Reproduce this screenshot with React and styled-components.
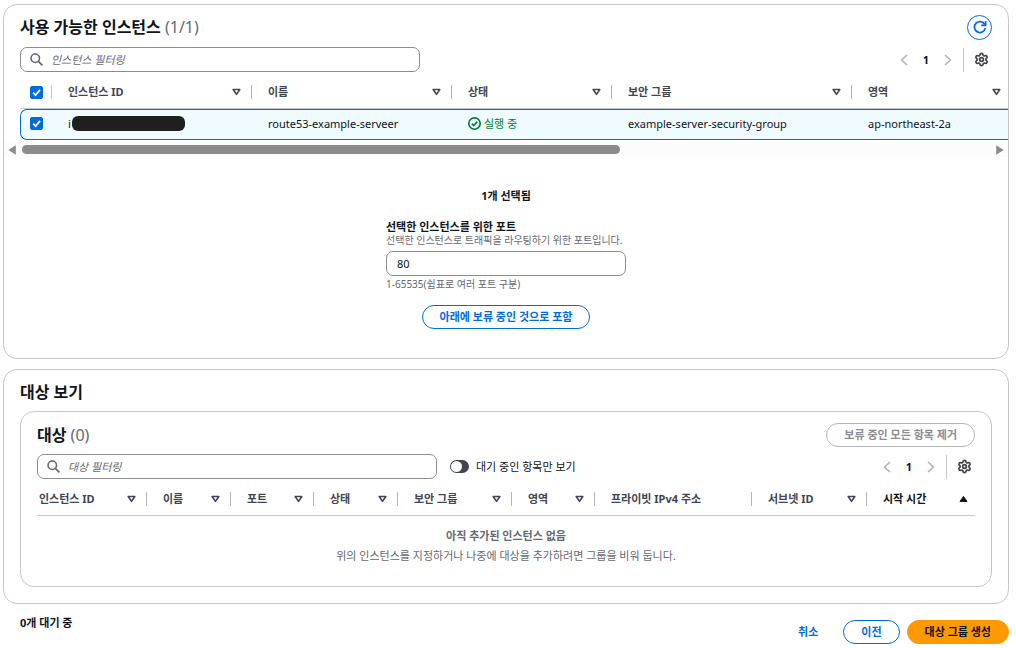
import React, { useState } from "react";
import styled, { createGlobalStyle } from "styled-components";
import { Settings } from "lucide-react";

const INSTANCE_COLUMNS = [
  { label: "인스턴스 ID", width: 200 },
  { label: "이름", width: 200 },
  { label: "상태", width: 160 },
  { label: "보안 그룹", width: 240 },
  { label: "영역", width: 160 },
];

const TARGET_COLUMNS = [
  { label: "인스턴스 ID", width: 110 },
  { label: "이름", width: 84 },
  { label: "포트", width: 83 },
  { label: "상태", width: 84 },
  { label: "보안 그룹", width: 114 },
  { label: "영역", width: 83 },
  { label: "프라이빗 IPv4 주소", width: 157, sort: "none" },
  { label: "서브넷 ID", width: 115 },
  { label: "시작 시간", width: 108, sort: "asc" },
];

function SearchIcon() {
  return (
    <svg width="13" height="13" viewBox="0 0 16 16" fill="none" stroke="#656871" strokeWidth="2">
      <circle cx="6.5" cy="6.5" r="5.2" />
      <path d="M10.3 10.3l5 5" />
    </svg>
  );
}

function RefreshIcon() {
  return (
    <svg width="14" height="14" viewBox="0 0 16 16" fill="none" stroke="currentColor" strokeWidth="2">
      <path d="M14 9.200A6.200 6.200 0 1 1 13.400 5.200" />
      <path d="M14.400 1v5H9.400" />
    </svg>
  );
}

function Chevron({ next }) {
  return (
    <svg width="8" height="12" viewBox="0 0 8 12" fill="none" stroke="#b4b4bb" strokeWidth="1.7">
      <path d={next ? "M1 1l5.4 5L1 11" : "M7 1L1.6 6 7 11"} />
    </svg>
  );
}

function SortIcon({ asc }) {
  return (
    <svg width="9" height="8" viewBox="0 0 9 8" strokeWidth="1.6" strokeLinejoin="round">
      {asc ? (
        <path d="M4.5 1.4L8 6.4H1z" fill="#0f141a" stroke="#0f141a" strokeWidth="1" />
      ) : (
        <path d="M1.2 1.5h6.6L4.5 6.4z" fill="none" stroke="#424650" />
      )}
    </svg>
  );
}

function StatusIcon() {
  return (
    <svg width="13" height="13" viewBox="0 0 16 16" fill="none" stroke="#00802f" strokeWidth="2">
      <circle cx="8" cy="8" r="7" />
      <path d="M4.8 8.2l2.3 2.3 4.2-4.8" />
    </svg>
  );
}

function Check({ label }) {
  const [checked, setChecked] = useState(true);
  return (
    <CheckWrap>
      <input
        type="checkbox"
        aria-label={label}
        checked={checked}
        onChange={(e) => setChecked(e.target.checked)}
      />
      {checked && (
        <svg width="13" height="13" viewBox="0 0 13 13" fill="none" stroke="#fff" strokeWidth="1.8">
          <path d="M3.2 6.6l2.4 2.5 4.4-5.2" />
        </svg>
      )}
    </CheckWrap>
  );
}

function Filter({ placeholder }) {
  return (
    <FilterBox>
      <SearchIcon />
      <input type="search" placeholder={placeholder} aria-label={placeholder} />
    </FilterBox>
  );
}

function Pager() {
  return (
    <PagerBar>
      <IconButton type="button" aria-label="이전 페이지">
        <Chevron />
      </IconButton>
      <PageNumber type="button">1</PageNumber>
      <IconButton type="button" aria-label="다음 페이지">
        <Chevron next />
      </IconButton>
      <PagerDivider />
      <IconButton type="button" aria-label="기본 설정">
        <Settings size={15} strokeWidth={2.8} color="#424650" />
      </IconButton>
    </PagerBar>
  );
}

function HeadCell({ column, first, last }) {
  const sort = column.sort || "desc";
  return (
    <Th scope="col">
      <HeadInner $first={first} $last={last} $sorted={sort === "asc"}>
        <span>{column.label}</span>
        {sort !== "none" && <SortIcon asc={sort === "asc"} />}
        {!last && <HeadDivider />}
      </HeadInner>
    </Th>
  );
}

export default function App() {
  const [port, setPort] = useState("80");
  const [pendingOnly, setPendingOnly] = useState(false);

  return (
    <Page>
      <GlobalStyle />

      {/* 사용 가능한 인스턴스 */}
      <Panel>
        <PanelHeader>
          <Title>
            사용 가능한 인스턴스 <Count>(1/1)</Count>
          </Title>
          <RefreshButton type="button" aria-label="새로 고침">
            <RefreshIcon />
          </RefreshButton>
        </PanelHeader>
        <Toolbar $inset={16}>
          <Filter placeholder="인스턴스 필터링" />
          <Pager />
        </Toolbar>

        <TableClip>
          <InstanceTable>
            <colgroup>
              <col width={32} />
              {INSTANCE_COLUMNS.map((c) => (
                <col key={c.label} width={c.width} />
              ))}
            </colgroup>
            <thead>
              <tr>
                <Th scope="col">
                  <CheckCell>
                    <Check label="모두 선택" />
                    <HeadDivider $light />
                  </CheckCell>
                </Th>
                {INSTANCE_COLUMNS.map((c) => (
                  <HeadCell key={c.label} column={c} />
                ))}
              </tr>
            </thead>
            <tbody>
              <tr>
                <Td>
                  <CheckCell $row>
                    <Check label="인스턴스 선택" />
                  </CheckCell>
                </Td>
                <Td>
                  <IdText>
                    i<Redacted />
                  </IdText>
                </Td>
                <Td>route53-example-serveer</Td>
                <Td>
                  <Status>
                    <StatusIcon />
                    실행 중
                  </Status>
                </Td>
                <Td>example-server-security-group</Td>
                <Td>ap-northeast-2a</Td>
              </tr>
            </tbody>
          </InstanceTable>
        </TableClip>
        <ScrollBar>
          <svg width="8" height="10" viewBox="0 0 8 10" fill="#8b8b8b">
            <path d="M7.8 .3v9.400L.3 5z" />
          </svg>
          <ScrollTrack>
            <ScrollThumb />
          </ScrollTrack>
          <svg width="8" height="10" viewBox="0 0 8 10" fill="#8b8b8b">
            <path d="M.2 .3v9.400L7.700 5z" />
          </svg>
        </ScrollBar>

        <PortForm onSubmit={(e) => e.preventDefault()}>
          <Selected>1개 선택됨</Selected>
          <Field>
            <label htmlFor="port">선택한 인스턴스를 위한 포트</label>
            <Hint>선택한 인스턴스로 트래픽을 라우팅하기 위한 포트입니다.</Hint>
            <PortInput id="port" type="text" value={port} onChange={(e) => setPort(e.target.value)} />
            <Hint>1-65535(쉼표로 여러 포트 구분)</Hint>
          </Field>
          <Button type="submit">아래에 보류 중인 것으로 포함</Button>
        </PortForm>
      </Panel>

      {/* 대상 보기 */}
      <Panel>
        <PanelHeader>
          <Title>대상 보기</Title>
        </PanelHeader>
        <InnerPanel>
          <InnerHeader>
            <Title>
              대상 <Count>(0)</Count>
            </Title>
            <Button type="button" $variant="disabled" disabled>
              보류 중인 모든 항목 제거
            </Button>
          </InnerHeader>
          <Toolbar $inset={0}>
            <Filter placeholder="대상 필터링" />
            <Toggle>
              <input
                type="checkbox"
                role="switch"
                checked={pendingOnly}
                onChange={(e) => setPendingOnly(e.target.checked)}
              />
              대기 중인 항목만 보기
            </Toggle>
            <Pager />
          </Toolbar>
          <Table>
            <colgroup>
              {TARGET_COLUMNS.map((c) => (
                <col key={c.label} width={c.width} />
              ))}
            </colgroup>
            <thead>
              <tr>
                {TARGET_COLUMNS.map((c, i) => (
                  <HeadCell
                    key={c.label}
                    column={c}
                    first={i === 0}
                    last={i === TARGET_COLUMNS.length - 1}
                  />
                ))}
              </tr>
            </thead>
            <tbody>
              <tr>
                <EmptyCell colSpan={TARGET_COLUMNS.length}>
                  <strong>아직 추가된 인스턴스 없음</strong>
                  <p>위의 인스턴스를 지정하거나 나중에 대상을 추가하려면 그룹을 비워 둡니다.</p>
                </EmptyCell>
              </tr>
            </tbody>
          </Table>
        </InnerPanel>
      </Panel>

      <Footer>
        <Pending>0개 대기 중</Pending>
        <Actions>
          <Button type="button" $variant="link">
            취소
          </Button>
          <Button type="button">이전</Button>
          <Button type="button" $variant="primary">
            대상 그룹 생성
          </Button>
        </Actions>
      </Footer>
    </Page>
  );
}

/* ===== styles ===== */

const GlobalStyle = createGlobalStyle`
  * {
    box-sizing: border-box;
  }
  body {
    margin: 0;
    background: #fff;
    color: #0f141a;
    font-family: "Noto Sans", "Noto Sans CJK KR", sans-serif;
    font-size: 11px;
    line-height: 16px;
  }
  button,
  input {
    font: inherit;
    color: inherit;
  }
  button {
    cursor: pointer;
  }
  svg {
    display: block;
    flex: none;
  }
`;

const Page = styled.main`
  display: flex;
  flex-direction: column;
  gap: 10px;
  padding: 4px 7px 4px 3px;
`;

const Panel = styled.section`
  border: 1px solid #c6c6cd;
  border-radius: 14px;
  padding-bottom: 16px;
  overflow: hidden;
`;

const PanelHeader = styled.header`
  display: flex;
  align-items: center;
  justify-content: space-between;
  height: 41px;
  padding: 3px 16px 0;
`;

const Title = styled.h2`
  margin: 0;
  font-size: 16px;
  line-height: 20px;
  font-weight: 700;
`;

const Count = styled.span`
  font-weight: 400;
  color: #656871;
`;

const RefreshButton = styled.button`
  display: grid;
  place-items: center;
  width: 25px;
  height: 25px;
  padding: 0;
  border: 1px solid #006ce0;
  border-radius: 50%;
  background: #fff;
  color: #006ce0;
`;

const Toolbar = styled.div`
  display: flex;
  align-items: center;
  margin-top: 1px;
  padding: 0 ${(p) => p.$inset}px;
`;

const FilterBox = styled.div`
  display: flex;
  align-items: center;
  gap: 8px;
  width: 400px;
  height: 25px;
  padding: 0 9px;
  border: 1px solid #8c8c94;
  border-radius: 7px;

  input {
    flex: 1;
    min-width: 0;
    padding: 0;
    border: 0;
    outline: 0;
    background: none;
  }
  input::placeholder {
    color: #656871;
    font-style: italic;
    opacity: 1;
  }
`;

const PagerBar = styled.nav`
  display: flex;
  align-items: center;
  margin-left: auto;
`;

const IconButton = styled.button`
  display: grid;
  place-items: center;
  width: 22px;
  height: 24px;
  padding: 0;
  border: 0;
  background: none;
`;

const PageNumber = styled(IconButton)`
  font-weight: 700;
`;

const PagerDivider = styled.span`
  width: 1px;
  height: 24px;
  margin: 0 6px 0 4px;
  background: #c6c6cd;
`;

const TableClip = styled.div`
  margin-left: 16px;
  overflow: hidden;
`;

const Table = styled.table`
  width: 100%;
  table-layout: fixed;
  border-collapse: separate;
  border-spacing: 0;
`;

const Th = styled.th`
  height: 37px;
  padding: 4px 0 0;
  border-bottom: 1px solid #c6c6cd;
  text-align: left;
  color: #424650;
`;

const HeadInner = styled.div`
  display: flex;
  align-items: center;
  gap: 10px;
  padding: 0 ${(p) => (p.$last ? 7 : 0)}px 0 ${(p) => (p.$first ? 2 : 16)}px;
  color: ${(p) => (p.$sorted ? "#0f141a" : "inherit")};
  white-space: nowrap;

  span:first-child {
    margin-right: auto;
  }
`;

const HeadDivider = styled.i`
  width: 1px;
  height: 14px;
  background: ${(p) => (p.$light ? "#c6c6cd" : "#b4b4bb")};
`;

const CheckCell = styled.div`
  display: flex;
  align-items: center;
  justify-content: space-between;
  padding-left: ${(p) => (p.$row ? 9 : 10)}px;
`;

const CheckWrap = styled.span`
  display: grid;

  input,
  svg {
    grid-area: 1 / 1;
  }
  svg {
    pointer-events: none;
  }
  input {
    appearance: none;
    width: 13px;
    height: 13px;
    margin: 0;
    border: 1px solid #8c8c94;
    border-radius: 2px;
  }
  input:checked {
    border-color: #006ce0;
    background: #006ce0;
  }
`;

const Td = styled.td`
  height: 31px;
  padding: 0 0 2px 16px;
  border: solid #006ce0;
  border-width: 1px 0;
  background: #f0fbff;
  white-space: nowrap;

  &:first-child {
    padding-left: 0;
    border-left-width: 1px;
    border-radius: 7px 0 0 7px;
  }
`;

const InstanceTable = styled(Table)`
  min-width: 992px;
`;

const IdText = styled.span`
  display: flex;
  align-items: center;
  gap: 1px;
`;

const Redacted = styled.span`
  width: 113px;
  height: 15px;
  border-radius: 6px;
  background: #1f1f1f;
`;

const Status = styled.span`
  display: flex;
  align-items: center;
  gap: 3px;
  color: #00802f;
`;

const ScrollBar = styled.div`
  display: flex;
  align-items: center;
  gap: 6px;
  height: 15px;
  margin-top: 2px;
  padding: 0 4px;
  background: #fcfcfc;
`;

const ScrollTrack = styled.div`
  flex: 1;
`;

const ScrollThumb = styled.div`
  width: 61.8%;
  height: 9px;
  border-radius: 5px;
  background: #8b8b8b;
`;

const PortForm = styled.form`
  display: flex;
  flex-direction: column;
  align-items: center;
  padding: 31px 0 13px;
`;

const Selected = styled.strong`
  margin-bottom: 16px;
`;

const Field = styled.div`
  display: flex;
  flex-direction: column;
  width: 240px;

  label {
    font-weight: 700;
    line-height: 14px;
  }
`;

const Hint = styled.span`
  font-size: 10px;
  line-height: 12px;
  color: #656871;
  white-space: nowrap;
`;

const PortInput = styled.input`
  height: 25px;
  margin: 5px 0 2px;
  padding: 0 10px;
  border: 1px solid #8c8c94;
  border-radius: 7px;
`;

const variants = {
  normal: { color: "#006ce0", border: "#006ce0", background: "#fff" },
  link: { color: "#006ce0", border: "transparent", background: "none" },
  disabled: { color: "#8c8c94", border: "#b4b4bb", background: "#fff" },
  primary: { color: "#0f141a", border: "#ff9900", background: "#ff9900" },
};

const Button = styled.button`
  height: 24px;
  padding: 0 17px;
  border: 1px solid ${(p) => variants[p.$variant || "normal"].border};
  border-radius: 12px;
  background: ${(p) => variants[p.$variant || "normal"].background};
  color: ${(p) => variants[p.$variant || "normal"].color};
  font-weight: 700;
  white-space: nowrap;

  ${PortForm} & {
    margin-top: 15px;
  }
`;

const InnerPanel = styled.div`
  margin: 0 16px;
  padding: 0 16px 22px;
  border: 1px solid #c6c6cd;
  border-radius: 14px;
`;

const InnerHeader = styled.header`
  display: flex;
  align-items: center;
  justify-content: space-between;
  height: 41px;
  padding-top: 5px;
`;

const Toggle = styled.label`
  display: flex;
  align-items: center;
  gap: 7px;
  margin-left: 13px;

  input {
    appearance: none;
    display: flex;
    width: 19px;
    height: 13px;
    margin: 0;
    padding: 1px;
    border-radius: 7px;
    background: #424650;
  }
  input::before {
    content: "";
    width: 11px;
    height: 11px;
    border-radius: 50%;
    background: #fff;
  }
  input:checked {
    justify-content: flex-end;
    background: #006ce0;
  }
`;

const EmptyCell = styled.td`
  padding: 12px 0 0;
  text-align: center;
  color: #656871;

  p {
    margin: 4px 0 0;
  }
`;

const Footer = styled.footer`
  display: flex;
  justify-content: space-between;
  padding: 0 0 0 17px;
`;

const Pending = styled.strong`
  line-height: 18px;
`;

const Actions = styled.div`
  display: flex;
  gap: 7px;
  padding-top: 6px;
`;
